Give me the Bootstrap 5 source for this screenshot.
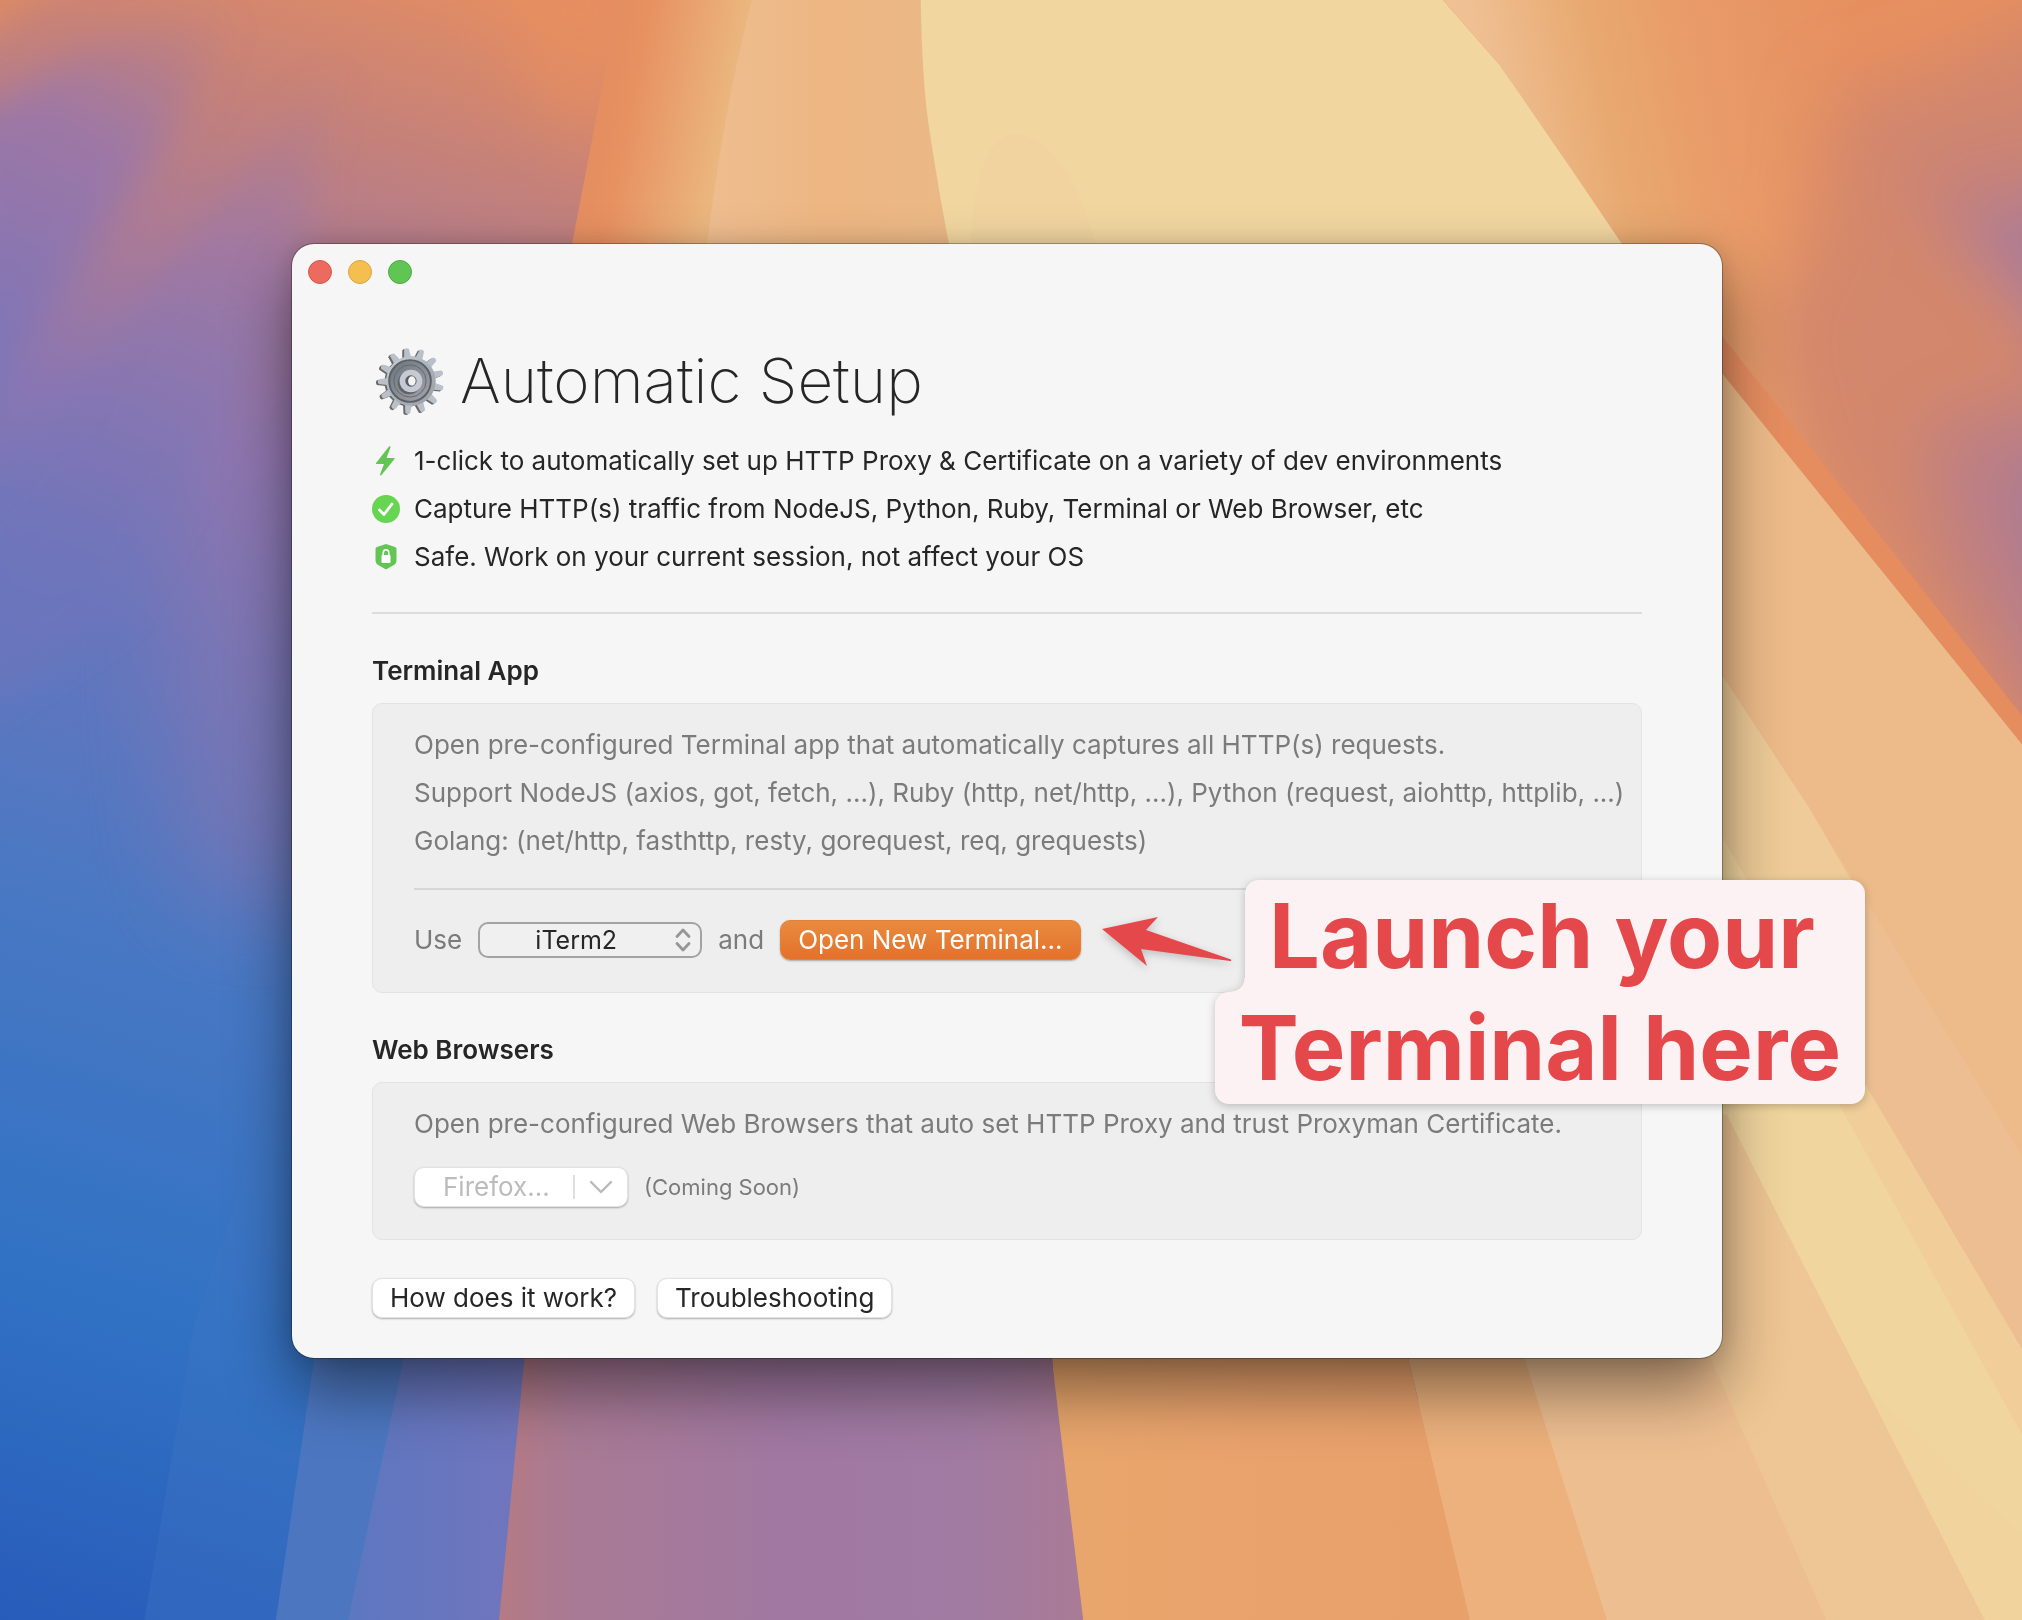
<!DOCTYPE html>
<html lang="en">
<head>
<meta charset="utf-8">
<meta name="viewport" content="width=device-width, initial-scale=1">
<title>Automatic Setup</title>
<link href="https://cdn.jsdelivr.net/npm/bootstrap@5.3.0/dist/css/bootstrap.min.css" rel="stylesheet">
<style>
  body { font-family: Inter, "Liberation Sans", sans-serif; font-size: 26px; line-height: 48px; color: #262626; background: #c98a72; }
  .wallpaper { position: fixed; inset: 0; width: 100%; height: 100%; z-index: -1; }
  .desktop { padding: 244px 8px 262px 0; overflow: hidden; }
  .app-window { width: 100%; max-width: 1430px; background: #f6f6f6; border-radius: 22px; box-shadow: 0 0 0 1px rgba(0,0,0,.28), 0 32px 64px rgba(0,0,0,.46), 0 0 24px rgba(0,0,0,.14); }
  .titlebar { padding: 16px; gap: 16px; }
  .light { width: 24px; height: 24px; border-radius: 50%; border: 1px solid; padding: 0; }
  .light-close { background: #ec6a5e; border-color: #d35a50; }
  .light-min { background: #f5bf4f; border-color: #d8a543; }
  .light-zoom { background: #61c554; border-color: #52a843; }
  .content { padding: 41px 80px 39px; }
  .page-title { font-size: 62px; line-height: 80px; font-weight: 200; gap: 12px; margin-bottom: 16px; }
  .page-title svg { width: 76px; height: 76px; padding: 2px; }
  .features li { gap: 14px; }
  .features svg { width: 28px; height: 32px; flex: none; }
  .rule { border: 0; border-top: 2px solid #dcdcdc; opacity: 1; }
  .features + .rule { margin: 31px 0 0; }
  .section-title { font-size: 26px; line-height: 30px; font-weight: 600; margin: 42px 0 17px; }
  .panel { background: #eee; border: 1px solid #e3e3e3; border-radius: 10px; color: #7b7b7b; padding: 17px 10px 32px 41px; }
  .panel .rule { margin: 23px 31px 30px 0; border-color: #d6d6d6; }
  .control-row { gap: 16px; line-height: 40px; }
  .browser-row { margin-top: 19px; }
  .picker select { appearance: none; width: 224px; height: 36px; font-size: 25px; line-height: 32px; padding: 0 28px 0 0; text-align: center; text-align-last: center; color: #262626; background: #f0f0f0; border: 2px solid #a3a3a3; border-radius: 10px; }
  .picker svg { right: 10px; top: 6px; width: 18px; height: 24px; pointer-events: none; }
  .mac-btn { --bs-btn-font-size: 26px; --bs-btn-line-height: 38px; --bs-btn-padding-y: 0; --bs-btn-padding-x: 17px; --bs-btn-border-radius: 10px; height: 40px; background: #fff; color: #262626; border: 1px solid #e2e2e2; box-shadow: 0 1px 2px rgba(0,0,0,.3); }
  .mac-btn-primary { background: linear-gradient(#e88b3e, #e4712b); color: #fff; border-color: #e5803a; }
  .mac-btn-split:disabled { opacity: 1; background: #fff; color: #bcbcbc; border-color: #e2e2e2; width: 214px; padding: 0 14px 0 28px; }
  .mac-btn-split svg { width: 40px; height: 24px; }
  .soon { font-size: 22px; }
  .footer-buttons { gap: 22px; margin-top: 38px; }
  .callout-arrow { left: 809px; top: 672px; width: 131px; height: 51px; filter: drop-shadow(0 3px 4px rgba(0,0,0,.2)); }
  .callout-note { right: -143px; top: 636px; font-size: 90px; line-height: 112px; font-weight: 700; color: #e5484b; filter: drop-shadow(0 2px 4px rgba(0,0,0,.22)); white-space: nowrap; }
  .callout-note span { background: #fcf1f3; padding: 0 24px; }
  .note-top { position: relative; border-radius: 14px 14px 0 0; }
  .callout-note .note-top { padding-right: 50px; }
  .note-top::before { content: ""; position: absolute; left: -14px; bottom: 0; width: 14px; height: 14px; background: radial-gradient(circle at 0 0, transparent 13px, #fcf1f3 14px); }
  .note-bottom { border-radius: 14px 0 14px 14px; }
</style>
<script src="https://cdn.jsdelivr.net/npm/bootstrap@5.3.0/dist/js/bootstrap.bundle.min.js"></script>
</head>
<body>
<svg class="wallpaper" viewBox="0 0 1568 1256" preserveAspectRatio="none" aria-hidden="true">
  <defs>
    <linearGradient id="left" gradientUnits="userSpaceOnUse" x1="0" y1="1256" x2="400" y2="0">
      <stop offset="0" stop-color="#285cba"/><stop offset=".2" stop-color="#3172c4"/><stop offset=".42" stop-color="#4a78c3"/>
      <stop offset=".58" stop-color="#6676bd"/><stop offset=".7" stop-color="#8a76b2"/><stop offset=".8" stop-color="#aa7a96"/><stop offset=".9" stop-color="#c58179"/><stop offset="1" stop-color="#e28d64"/>
    </linearGradient>
    <linearGradient id="peach" x1="0" x2="1"><stop offset="0" stop-color="#eebd8f"/><stop offset=".5" stop-color="#edb682"/><stop offset="1" stop-color="#eab987"/></linearGradient>
    <linearGradient id="band" gradientUnits="userSpaceOnUse" x1="462" y1="0" x2="575" y2="22"><stop offset="0" stop-color="#e18d62"/><stop offset=".35" stop-color="#e79060"/><stop offset="1" stop-color="#ebb57e"/></linearGradient>
    <linearGradient id="right" gradientUnits="userSpaceOnUse" x1="1150" y1="60" x2="1440" y2="0">
      <stop offset="0" stop-color="#efc094"/><stop offset=".3" stop-color="#e8a970"/><stop offset=".5" stop-color="#e99e6a"/><stop offset=".75" stop-color="#e79564"/><stop offset="1" stop-color="#e78f5f"/>
    </linearGradient>
    <linearGradient id="mauve" x1="0" x2="1" y1="0" y2="0"><stop offset="0" stop-color="#b57a84"/><stop offset=".12" stop-color="#a97a94"/><stop offset=".5" stop-color="#a078a2"/><stop offset=".8" stop-color="#a17ba2"/><stop offset="1" stop-color="#a97b96"/></linearGradient>
    <linearGradient id="amber" x1="0" x2="1"><stop offset="0" stop-color="#e8a66c"/><stop offset=".5" stop-color="#eaa26d"/><stop offset="1" stop-color="#e9a16c"/></linearGradient>
    <linearGradient id="violet" x1="0" x2="1"><stop offset="0" stop-color="#5d77c1"/><stop offset="1" stop-color="#7675bb"/></linearGradient>
    <linearGradient id="rayA" gradientUnits="userSpaceOnUse" x1="180" y1="10" x2="20" y2="300"><stop offset="0" stop-color="#a87a98" stop-opacity="0"/><stop offset=".4" stop-color="#9676ae"/><stop offset="1" stop-color="#7675bb"/></linearGradient>
    <linearGradient id="rayB" gradientUnits="userSpaceOnUse" x1="262" y1="50" x2="70" y2="430"><stop offset="0" stop-color="#a5799c" stop-opacity="0"/><stop offset=".4" stop-color="#9777ab"/><stop offset="1" stop-color="#6f75bb"/></linearGradient>
    <filter id="soft" x="-30%" y="-30%" width="160%" height="160%"><feGaussianBlur stdDeviation="26"/></filter>
    <filter id="ray" x="-30%" y="-30%" width="160%" height="160%"><feGaussianBlur stdDeviation="14"/></filter>
    <filter id="softer" x="-60%" y="-40%" width="220%" height="180%"><feGaussianBlur stdDeviation="38"/></filter>
  </defs>
  <rect width="1568" height="1256" fill="url(#left)"/>
  <path d="M390 -60H520L470 110L410 70Z" fill="#e88f5f" opacity=".7" filter="url(#soft)"/>
  <path d="M170 300L130 520L150 700H260V300Z" fill="#9a76a8" opacity=".45" filter="url(#softer)"/>
  <g filter="url(#ray)">
    <path d="M-30 -30H70L-30 40Z" fill="#e08c64" opacity=".9"/>
    <path d="M195 -10L130 105L50 220L-30 340V100L60 40Z" fill="url(#rayA)" opacity=".75"/>
    <path d="M275 30L245 130L235 230L170 330L90 480L-30 560V400L70 290L190 130Z" fill="url(#rayB)" opacity=".6"/>
  </g>
  <path d="M225 804L150 1029L112 1256H400V804Z" fill="#4377c2" opacity=".3"/>
  <path d="M247 1030L214 1256H440V1030Z" fill="#4c77c0"/>
  <path d="M318 1030L270 1256H440V1030Z" fill="url(#violet)"/>
  <path d="M480 0L443 192H560L600 0Z" fill="url(#band)"/>
  <path d="M583 0Q560 90 547 200H745L720 0Z" fill="url(#peach)"/>
  <path d="M714 0Q715 60 720 96Q728 150 738 200H1300L1161 48L1119 0Z" fill="#f1d6a0"/>
  <path d="M752 200Q755 110 784 104Q830 105 852 200Z" fill="#f1cf9d" opacity=".4"/>
  <path d="M1119 0Q1140 24 1161 48Q1210 118 1257 188L1335 289L1568 577V0Z" fill="url(#right)"/>
  <g filter="url(#soft)">
    <path d="M1420 75L1500 50L1640 -20V680L1400 370L1370 250L1410 180Z" fill="#d3876c"/>
    <path d="M1470 115L1640 80V270L1490 170Z" fill="#c98376"/>
    <path d="M1510 165L1640 150V320Z" fill="#a87a97"/>
    <path d="M1490 330L1640 290V660L1510 440Z" fill="#bd7f82"/>
    <path d="M1550 370L1640 340V600Z" fill="#a67a98"/>
  </g>
  <path d="M1257 188L1335 260L1568 555V577L1335 289Z" fill="#e68d60"/>
  <path d="M1257 188L1335 289L1568 577V1256H1100V1000H1330Z" fill="#edbb89"/>
  <path d="M1335 523L1404 628L1568 896V1256H1300V523Z" fill="#edbe92"/>
  <path d="M1335 523L1404 628L1446 700V840L1335 660Z" fill="#eecb98"/>
  <path d="M1335 648L1446 840L1568 1046V1256H1300V648Z" fill="#f1d59e"/>
  <path d="M1404 628L1446 700V840L1568 1046V896Z" fill="#edbe92"/>
  <path d="M1426 856L1568 1112V1046L1446 840Z" fill="#f0cd99"/>
  <path d="M1339 864L1539 1256H1300V864Z" fill="#eec594"/>
  <path d="M1539 1256L1446 1074L1568 1190V1256Z" fill="#f1cf9c" opacity=".4"/>
  <path d="M1326 1052L1416 1256H1170V1052Z" fill="#edbe90"/>
  <path d="M1181 1052L1246 1256H1100V1052Z" fill="#ecb381"/>
  <path d="M815 1040H1089L1140 1256H830Z" fill="url(#amber)"/>
  <path d="M1089 1040H1178L1246 1256H1140Z" fill="#ecb17c"/>
  <path d="M408 1040H814L840 1256H387Z" fill="url(#mauve)"/>
</svg>

<main class="desktop d-flex justify-content-center min-vh-100">
  <div class="app-window position-relative">
    <div class="titlebar d-flex">
      <button type="button" class="light light-close" aria-label="Close"></button>
      <button type="button" class="light light-min" aria-label="Minimize"></button>
      <button type="button" class="light light-zoom" aria-label="Zoom"></button>
    </div>

    <div class="content">
      <h1 class="page-title d-flex align-items-center">
        <svg viewBox="0 0 76 76" aria-hidden="true">
          <defs>
            <linearGradient id="steel" x1="0" y1="0" x2="1" y2="1"><stop offset="0" stop-color="#c9d0d8"/><stop offset=".5" stop-color="#adb3bb"/><stop offset="1" stop-color="#9b9ca2"/></linearGradient>
            <linearGradient id="dish" x1="0" y1="0" x2="1" y2="1"><stop offset="0" stop-color="#6d747c"/><stop offset="1" stop-color="#a3a5aa"/></linearGradient>
            <g id="teeth">
              <path id="tooth" d="M34 15L35.500 4Q38 2 40.500 4L42 15Z"/>
              <use href="#tooth" transform="rotate(27.7 38 38)"/><use href="#tooth" transform="rotate(55.4 38 38)"/><use href="#tooth" transform="rotate(83.1 38 38)"/>
              <use href="#tooth" transform="rotate(110.8 38 38)"/><use href="#tooth" transform="rotate(138.5 38 38)"/><use href="#tooth" transform="rotate(166.2 38 38)"/>
              <use href="#tooth" transform="rotate(193.8 38 38)"/><use href="#tooth" transform="rotate(221.5 38 38)"/><use href="#tooth" transform="rotate(249.2 38 38)"/>
              <use href="#tooth" transform="rotate(276.9 38 38)"/><use href="#tooth" transform="rotate(304.6 38 38)"/><use href="#tooth" transform="rotate(332.3 38 38)"/>
              <circle cx="38" cy="38" r="26"/>
            </g>
          </defs>
          <use href="#teeth" fill="#6b686a" transform="translate(-1 1) rotate(-8 38 38)"/>
          <use href="#teeth" fill="#b9c0c9" transform="translate(1 0) rotate(-8 38 38)"/>
          <circle cx="39" cy="38" r="26" fill="url(#steel)"/>
          <circle cx="38" cy="38" r="22" fill="url(#dish)" stroke="#5b6168" stroke-width="2"/>
          <circle cx="38" cy="38" r="17" fill="none" stroke="#62686f" stroke-width="1"/>
          <circle cx="37" cy="40" r="12" fill="#5e636a"/>
          <circle cx="39" cy="38" r="12" fill="#c5cad4"/>
          <circle cx="39" cy="38" r="6" fill="#5a5d63"/>
          <ellipse cx="40" cy="38" rx="4" ry="5" fill="#f4f4f4"/>
        </svg>
        Automatic Setup
      </h1>

      <ul class="features list-unstyled mb-0">
        <li class="d-flex align-items-center">
          <svg viewBox="0 0 28 32" aria-hidden="true"><path d="M17 1.500L4 18Q3.300 19 4.500 19H12L8 29.500Q8 31 9.500 30L22.500 14Q23.200 13 22 13H14.500L18.500 2.500Q18.500 .5 17 1.500Z" fill="#62c554"/></svg>
          1-click to automatically set up HTTP Proxy &amp; Certificate on a variety of dev environments
        </li>
        <li class="d-flex align-items-center">
          <svg viewBox="0 0 28 32" aria-hidden="true"><circle cx="14" cy="16" r="14" fill="#65d552"/><path d="M7.500 17L12 21.500L20 11" fill="none" stroke="#fff" stroke-width="2.800" stroke-linecap="round" stroke-linejoin="round"/></svg>
          Capture HTTP(s) traffic from NodeJS, Python, Ruby, Terminal or Web Browser, etc
        </li>
        <li class="d-flex align-items-center">
          <svg viewBox="0 0 28 32" aria-hidden="true"><path d="M14 3L23 6Q24.500 6.500 24.500 8V19Q24.500 22.500 21 24.500L14 28.500L7 24.500Q3.500 22.500 3.500 19V8Q3.500 6.500 5 6Z" fill="#62c554"/><rect x="9.500" y="14" width="9" height="8" rx="1" fill="#fff"/><path d="M11.200 14.500V12A2.800 3.300 0 0 1 16.800 12V14.500" fill="none" stroke="#fff" stroke-width="1.600"/></svg>
          Safe. Work on your current session, not affect your OS
        </li>
      </ul>

      <hr class="rule">

      <h2 class="section-title">Terminal App</h2>
      <section class="panel">
        <div>Open pre-configured Terminal app that automatically captures all HTTP(s) requests.</div>
        <div>Support NodeJS (axios, got, fetch, ...), Ruby (http, net/http, ...), Python (request, aiohttp, httplib, ...)</div>
        <div>Golang: (net/http, fasthttp, resty, gorequest, req, grequests)</div>
        <hr class="rule">
        <div class="control-row d-flex align-items-center">
          <label for="terminal">Use</label>
          <div class="picker position-relative d-flex">
            <select id="terminal"><option>iTerm2</option></select>
            <svg class="position-absolute" viewBox="0 0 18 24" aria-hidden="true"><path d="M3 8.500L9 2L15 8.500M3 15.500L9 22L15 15.500" fill="none" stroke="#969696" stroke-width="2.800" stroke-linecap="round" stroke-linejoin="round"/></svg>
          </div>
          <span>and</span>
          <button type="button" class="btn mac-btn mac-btn-primary">Open New Terminal...</button>
        </div>
      </section>

      <h2 class="section-title">Web Browsers</h2>
      <section class="panel">
        <div>Open pre-configured Web Browsers that auto set HTTP Proxy and trust Proxyman Certificate.</div>
        <div class="control-row browser-row d-flex align-items-center">
          <button type="button" class="btn mac-btn mac-btn-split d-flex align-items-center justify-content-between" disabled>
            Firefox...
            <svg viewBox="0 0 40 24" aria-hidden="true"><path d="M1 0V24" stroke="#dedede" stroke-width="2"/><path d="M18 7L28 17L38 7" fill="none" stroke="#b9b9b9" stroke-width="2.400" stroke-linecap="round" stroke-linejoin="round"/></svg>
          </button>
          <span class="soon">(Coming Soon)</span>
        </div>
      </section>

      <div class="footer-buttons d-flex">
        <button type="button" class="btn mac-btn">How does it work?</button>
        <button type="button" class="btn mac-btn">Troubleshooting</button>
      </div>
    </div>

    <svg class="callout-arrow position-absolute" viewBox="0 0 131 51" aria-hidden="true"><path d="M1 13L57 1L45 14L130 43.500Q131 45 129 45L40 33L46 50Z" fill="#e5484b"/></svg>
    <div class="callout-note position-absolute d-flex flex-column align-items-end">
      <span class="note-top">Launch your</span>
      <span class="note-bottom">Terminal here</span>
    </div>
  </div>
</main>
</body>
</html>
